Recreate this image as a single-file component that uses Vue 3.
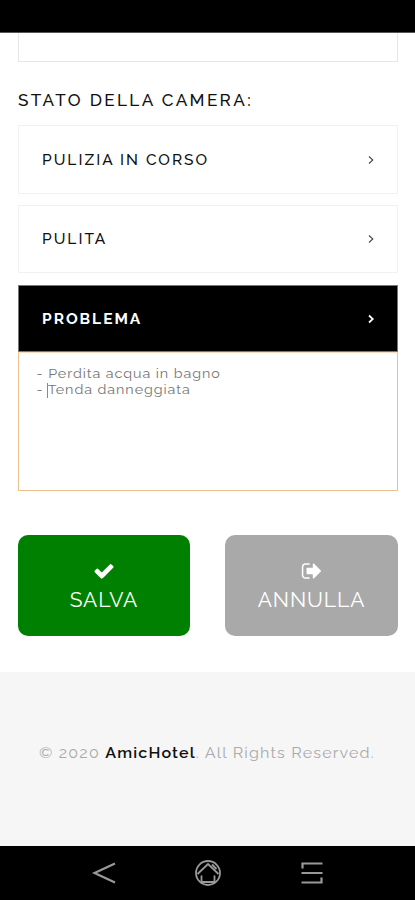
<template>
  <div class="screen">
    <div class="status-bar"></div>

    <main class="content">
      <div class="previous-field"></div>

      <h4 class="section-title"><span>Stato della camera:</span></h4>

      <div class="options">
        <button
          v-for="option in options"
          :key="option.id"
          class="option"
          :class="[option.id, { active: option.id === selected }]"
          @click="selected = option.id"
        >
          <span class="label">{{ option.label }}</span>
          <svg class="chevron" viewBox="0 0 8 10">
            <path d="M2 1.500 L5.800 5 L2 8.500" />
          </svg>
        </button>
      </div>

      <div class="note">
        <textarea v-model="note" spellcheck="false"></textarea>
        <span class="caret"></span>
      </div>

      <div class="actions">
        <button class="btn btn-save">
          <svg class="icon" viewBox="0 0 1792 1792">
            <path d="M1671 566q0 40-28 68l-724 724-136 136q-28 28-68 28t-68-28l-136-136-362-362q-28-28-28-68t28-68l136-136q28-28 68-28t68 28l294 295 656-657q28-28 68-28t68 28l136 136q28 28 28 68z" />
          </svg>
          <span>SALVA</span>
        </button>
        <button class="btn btn-cancel">
          <svg class="icon" viewBox="0 0 1792 1792">
            <path d="M704 1440q0 4 1 20t.5 26.500-3 23.500-10 19.500-20.500 6.500h-320q-119 0-203.500-84.500t-84.500-203.500v-704q0-119 84.500-203.500t203.500-84.500h320q13 0 22.500 9.500t9.500 22.500q0 4 1 20t.5 26.500-3 23.500-10 19.500-20.500 6.500h-320q-66 0-113 47t-47 113v704q0 66 47 113t113 47h312l11.500 1 11.500 3 8 5.500 7 9 2 13.500zm928-544q0 26-19 45l-544 544q-19 19-45 19t-45-19-19-45v-288h-448q-26 0-45-19t-19-45v-384q0-26 19-45t45-19h448v-288q0-26 19-45t45-19 45 19l544 544q19 19 19 45z" />
          </svg>
          <span>ANNULLA</span>
        </button>
      </div>
    </main>

    <footer class="footer">
      <p>© 2020 <strong>AmicHotel</strong>. All Rights Reserved.</p>
    </footer>

    <nav class="nav-bar">
      <svg viewBox="0 0 26 26">
        <path d="M24 3.500 L3.500 13 L24 22.500" />
      </svg>
      <svg class="home" viewBox="0 0 26 26">
        <circle cx="13" cy="13" r="12" />
        <path d="M2.500 14 L13 4 L23.500 14 M6.500 15.500 V22 H19.500 V15.500 M17 4.500 L21.500 9" />
      </svg>
      <svg viewBox="0 0 26 26">
        <path d="M23.500 3.500 H3.500 V8.500 M2.500 13 H23.500 M2.500 22.500 H22.500 V17.500" />
      </svg>
    </nav>
  </div>
</template>

<script setup>
import { ref } from 'vue'

const options = [
  { id: 'cleaning', label: 'PULIZIA IN CORSO' },
  { id: 'clean', label: 'PULITA' },
  { id: 'problem', label: 'PROBLEMA' }
]

const selected = ref('problem')
const note = ref('- Perdita acqua in bagno\n- Tenda danneggiata')
</script>

<style>
body {
  margin: 0;
  background: #fff;
}
</style>

<style scoped>
.screen {
  display: flex;
  flex-direction: column;
  width: 100%;
  height: 900px;
  overflow: hidden;
  font-family: Raleway, Lato, sans-serif;
  color: #111;
}

.screen * {
  box-sizing: border-box;
}

button,
textarea {
  font-family: inherit;
  margin: 0;
}

.status-bar {
  flex: none;
  height: 33px;
  background: #000;
  border-bottom: 1px solid #555;
}

.content {
  flex: none;
  height: 639px;
  padding: 0 17px 0 18px;
}

.previous-field {
  height: 29px;
  border: 1px solid #e6e6e6;
  border-top: 0;
}

.section-title {
  display: flex;
  align-items: center;
  height: 63px;
  margin: 0;
  padding-top: 14px;
  font-size: 16px;
  font-weight: 500;
  letter-spacing: 2.2px;
  text-transform: uppercase;
  white-space: nowrap;
}

.section-title span,
.label {
  transform: scaleX(1.07);
  transform-origin: left center;
}

.options {
  display: flex;
  flex-direction: column;
  gap: 11px;
}

.option {
  display: flex;
  align-items: center;
  justify-content: space-between;
  height: 69px;
  padding: 0 22px 1px 23px;
  border: 1px solid #f1f1f1;
  background: #fff;
  color: #111;
  font-size: 14.5px;
  font-weight: 500;
  letter-spacing: 1.85px;
  cursor: pointer;
}

.clean {
  height: 68px;
}

.problem {
  height: 67px;
  margin-top: 1px;
}

.option.active {
  border-color: #777;
  background: #000;
  color: #fff;
  font-weight: 700;
}

.chevron {
  width: 8px;
  height: 10px;
  margin-top: 1px;
  fill: none;
  stroke: #444;
  stroke-width: 1.1;
}

.active .chevron {
  stroke: #fff;
  stroke-width: 1.7;
}

.note {
  position: relative;
  height: 139px;
  border: 1px solid #edc08f;
  border-top-color: #f8dcc0;
}

.note textarea {
  display: block;
  width: 90%;
  height: 100%;
  padding: 13px 16px;
  border: 0;
  outline: none;
  resize: none;
  background: transparent;
  color: #777;
  font-size: 13px;
  line-height: 16px;
  letter-spacing: 0.85px;
  transform: scaleX(1.1);
  transform-origin: left center;
}

.caret {
  position: absolute;
  top: 30px;
  left: 28px;
  width: 1px;
  height: 15px;
  background: #888;
}

.actions {
  display: grid;
  grid-template-columns: 172px 173px;
  justify-content: space-between;
  margin-top: 44px;
}

.btn {
  display: flex;
  flex-direction: column;
  align-items: center;
  height: 101px;
  padding: 25px 0 0;
  border: 0;
  border-radius: 10px;
  color: #fff;
  font-size: 21px;
  line-height: 28px;
  letter-spacing: 0.9px;
  cursor: pointer;
}

.btn-save {
  background: #008000;
}

.btn-cancel {
  background: #a9a9a9;
}

.icon {
  width: 22px;
  height: 22px;
  margin-bottom: 4px;
  fill: #fff;
}

.footer {
  flex: none;
  display: flex;
  align-items: center;
  justify-content: center;
  height: 174px;
  padding-bottom: 12px;
  background: #f6f6f6;
}

.footer p {
  margin: 0;
  color: #aaa;
  font-size: 15px;
  letter-spacing: 1.1px;
  white-space: nowrap;
  transform: scaleX(1.07);
}

.footer strong {
  color: #111;
  font-weight: 600;
}

.nav-bar {
  flex: none;
  display: flex;
  align-items: center;
  justify-content: space-between;
  height: 54px;
  padding: 0 90px 0 91px;
  background: #000;
}

.nav-bar svg {
  width: 26px;
  height: 26px;
  fill: none;
  stroke: #999;
  stroke-width: 2.2;
}

.nav-bar .home {
  stroke-width: 1.8;
}
</style>
